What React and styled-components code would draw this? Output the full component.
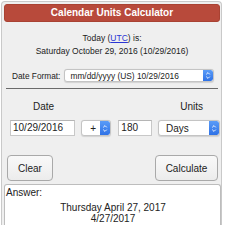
import React from "react";
import styled, { createGlobalStyle } from "styled-components";

const Global = createGlobalStyle`
  html, body { margin: 0; padding: 0; background: #ffffff; overflow: hidden; }
  body { font-family: "Liberation Sans", Arial, Helvetica, sans-serif; color: #222; }
  * { box-sizing: border-box; }
`;

const Panel = styled.div`
  margin: 1px 0 0 1px;
  width: 221px;
  height: 224px;
  border: 1px solid #c9c9c9;
  border-bottom: none;
  border-radius: 4px 4px 0 0;
  background: #efefef;
  padding: 2px 1px 0 2px;
  display: flex;
  flex-direction: column;
`;

const Header = styled.div`
  height: 18px;
  border-radius: 3px;
  background: #b84a3b;
  border: 1px solid #a94233;
  color: #fff;
  font-weight: bold;
  font-size: 10px;
  line-height: 16px;
  text-align: center;
`;

const Info = styled.div`
  margin-top: 10px;
  font-size: 8.5px;
  line-height: 13px;
  text-align: center;
  color: #222;
`;

const Link = styled.span`
  color: #2b35d4;
  text-decoration: underline;
`;

const FormatRow = styled.div`
  margin-top: 11px;
  display: flex;
  align-items: center;
  padding: 0 6px 0 8px;
  gap: 4px;
  height: 13px;
`;

const Label = styled.span`
  font-size: 8.3px;
  white-space: nowrap;
`;

const SelectBox = styled.div`
  flex: ${(p) => (p.$grow ? 1 : "none")};
  width: ${(p) => (p.$w ? `${p.$w}px` : "auto")};
  height: ${(p) => p.$h}px;
  background: #fff;
  border: 1px solid #c4c4c4;
  border-radius: 3px;
  display: flex;
  align-items: center;
  justify-content: space-between;
  overflow: hidden;
  font-size: ${(p) => p.$fs}px;
  box-shadow: 0 0.5px 1px rgba(0, 0, 0, 0.12);
`;

const SelectText = styled.span`
  padding-left: ${(p) => p.$pl}px;
  white-space: nowrap;
`;

const Stepper = styled.span`
  width: 10px;
  height: 100%;
  background: linear-gradient(#5a9cf8, #2f72e6);
  border-radius: 0 2px 2px 0;
  display: flex;
  align-items: center;
  justify-content: center;
`;

const Rule = styled.div`
  margin: 6px 2px 0 2px;
  height: 1px;
  background: #6a6a6a;
`;

const LabelRow = styled.div`
  margin-top: 12px;
  display: flex;
  justify-content: space-between;
  font-size: 10px;
  line-height: 12px;
  padding: 0 17px 0 29px;
`;

const InputRow = styled.div`
  margin-top: 7px;
  display: flex;
  align-items: center;
  padding-left: 6px;
  height: 16px;
`;

const TextInput = styled.div`
  width: ${(p) => p.$w}px;
  margin-left: ${(p) => p.$ml || 0}px;
  height: 16px;
  background: #fff;
  border: 1px solid #c8c8c8;
  border-top-color: #b5b5b5;
  font-size: 10px;
  line-height: 14px;
  padding-left: 2px;
  white-space: nowrap;
`;

const SelectWrap = styled.div`
  margin-left: ${(p) => p.$ml}px;
  display: flex;
`;

const ButtonRow = styled.div`
  margin-top: 19px;
  display: flex;
  justify-content: space-between;
  padding: 0 2px 0 3px;
`;

const Button = styled.div`
  width: ${(p) => p.$w}px;
  height: 26px;
  border: 1px solid #a9a9a9;
  border-radius: 4px;
  background: linear-gradient(#f9f9f9, #ececec);
  font-size: 10px;
  display: flex;
  align-items: center;
  justify-content: center;
  color: #222;
`;

const AnswerBox = styled.div`
  margin-top: 3px;
  margin-right: -1px;
  flex: 1;
  background: #fff;
  border: 1px solid #bdbdbd;
  border-bottom: none;
  border-radius: 3px 3px 0 0;
  padding: 0 0 0 1px;
  font-size: 10px;
  line-height: 11px;
`;

const AnswerLabel = styled.div`
  padding-top: 2px;
`;

const Result = styled.div`
  margin-top: 4px;
  text-align: center;
`;

const Chevrons = () => (
  <svg width="6" height="9" viewBox="0 0 6 9">
    <path d="M1.2 3.4 L3 1.6 L4.8 3.4" fill="none" stroke="#fff" strokeWidth="0.9" />
    <path d="M1.2 5.6 L3 7.4 L4.8 5.6" fill="none" stroke="#fff" strokeWidth="0.9" />
  </svg>
);

export default function App() {
  return (
    <>
      <Global />
      <Panel>
        <Header>Calendar Units Calculator</Header>
        <Info>
          <div>
            Today (<Link>UTC</Link>) is:
          </div>
          <div>Saturday October 29, 2016 (10/29/2016)</div>
        </Info>
        <FormatRow>
          <Label>Date Format:</Label>
          <SelectBox $grow $h={13} $fs={8.4}>
            <SelectText $pl={5}>mm/dd/yyyy (US) 10/29/2016</SelectText>
            <Stepper>
              <Chevrons />
            </Stepper>
          </SelectBox>
        </FormatRow>
        <Rule />
        <LabelRow>
          <span>Date</span>
          <span>Units</span>
        </LabelRow>
        <InputRow>
          <TextInput $w={66}>10/29/2016</TextInput>
          <SelectWrap $ml={6}>
            <SelectBox $w={30} $h={16} $fs={10}>
              <SelectText $pl={8}>+</SelectText>
              <Stepper>
                <Chevrons />
              </Stepper>
            </SelectBox>
          </SelectWrap>
          <TextInput $w={34} $ml={7}>180</TextInput>
          <SelectWrap $ml={6}>
            <SelectBox $w={62} $h={16} $fs={10}>
              <SelectText $pl={7}>Days</SelectText>
              <Stepper>
                <Chevrons />
              </Stepper>
            </SelectBox>
          </SelectWrap>
        </InputRow>
        <ButtonRow>
          <Button $w={46}>Clear</Button>
          <Button $w={63}>Calculate</Button>
        </ButtonRow>
        <AnswerBox>
          <AnswerLabel>Answer:</AnswerLabel>
          <Result>
            <div>Thursday April 27, 2017</div>
            <div>4/27/2017</div>
          </Result>
        </AnswerBox>
      </Panel>
    </>
  );
}
